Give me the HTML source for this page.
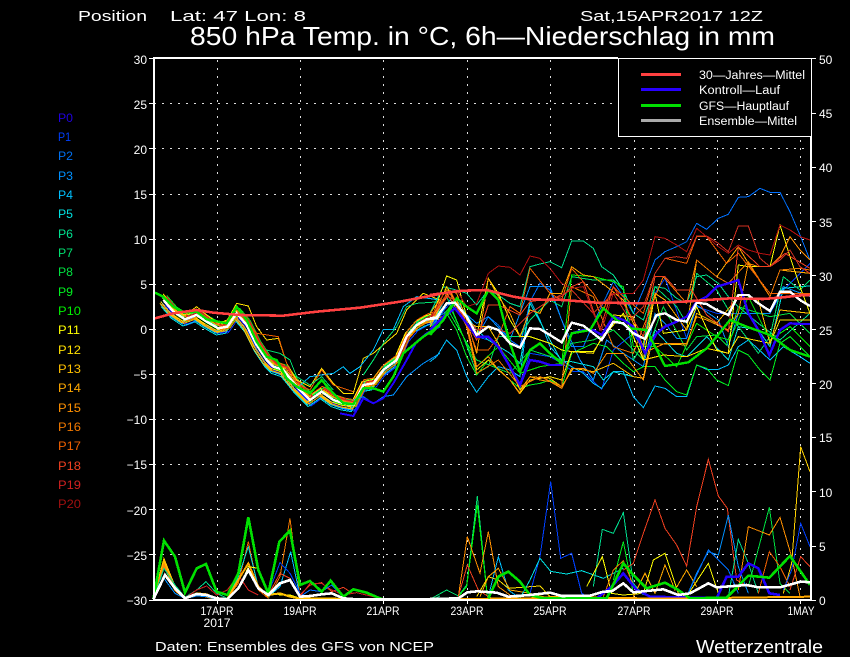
<!DOCTYPE html>
<html><head><meta charset="utf-8"><title>850 hPa Temp</title>
<style>
html,body{margin:0;padding:0;background:#000;width:850px;height:657px;overflow:hidden}
svg{display:block}
text{font-family:"Liberation Sans",sans-serif;fill:#fff}
polyline{fill:none;stroke-linejoin:miter;vector-effect:non-scaling-stroke;shape-rendering:crispEdges}
.g line{stroke:#ddd;stroke-width:1;stroke-dasharray:2 6;shape-rendering:crispEdges}
.t line{stroke:#fff;stroke-width:1;shape-rendering:crispEdges}
.l text{font-size:12px;text-anchor:end}
.r text{font-size:12px}
.x text{font-size:12px;text-anchor:middle}
.p text{font-size:12px}
.leg text{font-size:11.5px}
</style></head><body>
<svg width="850" height="657" viewBox="0 0 850 657" xmlns="http://www.w3.org/2000/svg">
<rect width="850" height="657" fill="#000"/>
<defs>
<polyline id="e" points="70,90 100,125 135,148 170,135 200,155 235,175 262,170 290,130 320,165 350,225 380,270 400,290 430,300 470,350 510,390 545,365 580,390 610,400 640,405 670,345 700,340 730,300 770,270 800,200 830,165 860,148 900,135"/>
</defs>
<g class="g">
<line x1="154" x2="811" y1="103.5" y2="103.5"/><line x1="154" x2="811" y1="148.5" y2="148.5"/><line x1="154" x2="811" y1="194.5" y2="194.5"/><line x1="154" x2="811" y1="239.5" y2="239.5"/><line x1="154" x2="811" y1="284.5" y2="284.5"/><line x1="154" x2="811" y1="329.5" y2="329.5"/><line x1="154" x2="811" y1="374.5" y2="374.5"/><line x1="154" x2="811" y1="419.5" y2="419.5"/><line x1="154" x2="811" y1="464.5" y2="464.5"/><line x1="154" x2="811" y1="509.5" y2="509.5"/><line x1="154" x2="811" y1="554.5" y2="554.5"/>
<line x1="217.5" x2="217.5" y1="60" y2="600"/><line x1="300.5" x2="300.5" y1="60" y2="600"/><line x1="383.5" x2="383.5" y1="60" y2="600"/><line x1="467.5" x2="467.5" y1="60" y2="600"/><line x1="550.5" x2="550.5" y1="60" y2="600"/><line x1="634.5" x2="634.5" y1="60" y2="600"/><line x1="717.5" x2="717.5" y1="60" y2="600"/><line x1="800.5" x2="800.5" y1="60" y2="600"/>
</g>

<!-- early temperature bundle -->
<g stroke-width="1" transform="translate(140,270) scale(.33333)">
<use href="#e" stroke="#2000ff" x="6" y="14"/><use href="#e" stroke="#0040ff" x="3" y="18"/><use href="#e" stroke="#0070ff" x="-4" y="12"/><use href="#e" stroke="#0090ff" x="-6" y="6"/><use href="#e" stroke="#00c0ff" x="-8" y="14"/><use href="#e" stroke="#00e0e0" x="-6" y="20"/><use href="#e" stroke="#00e090" x="-4" y="-8"/><use href="#e" stroke="#00e070" x="5" y="-12"/><use href="#e" stroke="#00e040" x="6" y="-4"/><use href="#e" stroke="#00f020" x="10" y="-14"/><use href="#e" stroke="#00f000" x="4" y="6"/><use href="#e" stroke="#ffff00" x="-4" y="-10"/><use href="#e" stroke="#ffe000" x="-8" y="5"/><use href="#e" stroke="#ffc000" x="-10" y="10"/><use href="#e" stroke="#ffa800" x="-3" y="12"/><use href="#e" stroke="#ff9000" x="5" y="-6"/><use href="#e" stroke="#f07800" x="8" y="4"/><use href="#e" stroke="#f06000" x="2" y="-16"/><use href="#e" stroke="#f04020" x="8" y="-8"/><use href="#e" stroke="#d02020" x="10" y="-10"/>
<polyline stroke="#ffe000" points="70,72 100,120 135,135 170,110 200,135 235,160 262,150 290,100 325,108 350,170 380,210 415,205 440,280 470,330 510,350 545,295 580,340 610,370 640,370 670,265 700,250 770,190 800,120 850,70 900,90"/>
<polyline stroke="#00c0ff" points="470,355 510,320 580,310 610,290 630,310 660,290 700,240 730,178 760,178 790,110 830,80 900,90"/>
<polyline stroke="#0090ff" points="640,390 670,380 700,400 730,380 760,375 800,320 850,280 900,250"/>
<polyline stroke="#2000ff" stroke-width="2" points="600,430 640,438 670,385 700,400 730,385 760,340 800,270 830,215 860,190 900,170"/>
<polyline stroke="#f06000" points="290,120 350,190 415,200 440,280 470,340 510,360 545,300 580,345 640,365"/>
<polyline stroke="#00e070" points="380,240 420,250 450,270 470,320 510,345 545,320 580,360" />
<polyline stroke="#00e070" points="670,315 700,270 730,220 770,170 800,110 830,100 900,95"/>
</g>

<!-- late temperature members -->
<g stroke-width="1" transform="translate(430,180) scale(.33333)">
<polyline stroke="#0040ff" points="0,440 60,370 140,470 175,480 205,500 270,610 300,520 360,530 395,550 430,575 460,575 515,628 550,510 610,460 640,510 675,340 705,295 770,475 800,380 860,400 925,400 1020,400 1060,330 1140,250"/>
<polyline stroke="#0070ff" points="0,430 40,400 80,370 110,410 140,470 175,410 205,435 240,480 270,500 300,365 330,310 360,330 395,420 425,500 460,500 490,430 550,305 580,350 610,400 640,330 675,240 705,215 740,200 770,185 800,130 830,148 865,115 895,103 925,52 955,50 990,25 1020,37 1050,37 1080,95 1110,165 1140,240"/>
<polyline stroke="#0090ff" points="0,450 60,360 140,430 175,410 240,480 300,320 360,320 395,420 450,540 490,600 530,480 580,520 640,560 675,400 705,430 740,475 770,475 800,375 865,420 895,500 925,400 1020,400 1060,320 1140,350"/>
<polyline stroke="#00c0ff" points="0,545 20,530 50,480 80,510 110,590 140,637 175,590 205,560 240,570 270,590 300,360 330,420 360,500 395,540 425,560 460,580 490,610 515,625 550,575 580,575 610,650 640,683 675,618 705,625 740,650 770,650 800,555 830,568 865,568 895,555 925,500 955,480 1020,540 1060,500 1110,530 1140,550"/>
<polyline stroke="#00e0e0" points="0,440 50,350 80,360 140,450 175,480 240,520 270,550 300,370 360,480 395,545 425,545 490,560 520,600 550,575 610,590 640,595 675,450 740,520 770,530 830,470 895,540 925,440 985,450 1020,500 1060,325 1110,320 1140,318"/>
<polyline stroke="#00e090" points="0,400 40,320 80,330 110,340 140,375 175,330 205,345 240,370 270,380 300,260 330,252 360,245 395,263 425,183 460,183 490,205 515,260 550,285 580,330 610,400 640,420 675,320 705,325 740,355 770,370 800,290 830,285 865,310 895,350 925,380 985,430 1050,480 1140,400"/>
<polyline stroke="#00e070" points="0,420 50,350 100,470 140,580 175,560 205,470 270,470 300,420 360,360 395,380 425,290 490,300 550,300 580,330 610,540 640,490 675,320 740,380 770,430 800,280 860,330 925,440 985,520 1020,470 1060,290 1110,330 1140,300"/>
<polyline stroke="#00e040" points="0,440 60,400 140,540 240,580 300,510 395,540 425,490 490,480 550,450 610,510 640,540 700,380 770,510 800,470 860,465 890,495 925,380 1020,410 1080,400 1140,460"/>
<polyline stroke="#00f020" points="0,450 50,400 80,450 110,530 140,585 175,540 205,570 240,600 270,625 300,615 330,610 360,600 395,620 425,520 490,490 530,500 580,550 610,575 640,560 675,560 705,600 740,635 770,645 800,555 830,565 860,600 895,617 925,510 955,525 990,570 1020,600 1050,490 1080,470 1110,500 1140,530"/>
<polyline stroke="#00f000" points="0,460 60,380 140,560 205,500 270,580 330,560 395,550 425,285 490,290 550,305 580,320 610,500 675,500 740,560 800,430 860,470 900,480 955,350 1020,480 1080,440 1140,500"/>
<polyline stroke="#ffff00" points="0,430 50,288 80,300 110,410 140,470 175,295 205,340 240,420 270,470 300,470 360,490 395,510 425,515 490,515 520,470 580,400 640,540 675,340 700,460 770,450 800,380 860,510 895,520 925,255 955,260 1020,260 1050,135 1080,230 1110,320 1140,400"/>
<polyline stroke="#ffe000" points="0,430 50,320 100,400 140,570 175,540 240,600 270,640 300,600 360,590 395,600 425,515 490,520 550,405 610,410 640,540 700,525 770,530 830,505 895,520 925,470 1020,490 1050,420 1140,420"/>
<polyline stroke="#ffc000" points="0,440 50,340 100,420 140,440 175,440 205,490 270,630 300,590 360,595 395,620 430,565 490,575 550,550 610,590 640,595 660,490 770,495 800,400 860,430 925,350 985,360 1020,490 1050,390 1140,400"/>
<polyline stroke="#ffa800" points="0,400 50,330 80,340 110,420 140,520 175,295 205,350 240,400 270,470 300,390 330,400 360,340 395,340 425,260 460,285 490,290 530,320 580,360 610,430 640,500 675,340 705,360 770,450 800,240 860,290 925,200 955,250 1020,350 1050,270 1140,280"/>
<polyline stroke="#ff9000" points="0,420 50,350 80,360 110,430 140,560 175,530 205,570 240,600 268,640 300,590 330,600 360,605 395,625 425,565 460,565 490,580 530,520 580,520 610,560 640,600 660,510 705,490 770,490 800,410 830,420 895,450 925,400 955,250 985,260 1020,260 1050,230 1080,170 1110,210 1140,240"/>
<polyline stroke="#f07800" points="0,410 60,340 110,440 140,580 205,540 270,620 330,590 395,620 425,320 490,350 550,500 610,520 640,440 700,290 770,370 800,240 860,290 895,310 955,245 1020,350 1050,270 1110,265 1140,270"/>
<polyline stroke="#f06000" points="0,410 60,330 110,430 140,510 175,510 205,470 240,380 270,400 300,265 360,340 395,360 425,265 490,340 520,390 550,320 580,350 640,400 675,280 705,235 770,250 800,170 830,170 890,250 925,220 1020,340 1140,340"/>
<polyline stroke="#f04020" points="0,420 60,340 140,480 175,375 205,375 270,405 300,365 395,350 425,320 460,305 510,450 550,320 610,420 640,470 675,290 705,290 740,330 785,330 830,405 895,455 925,200 990,260 1020,260 1065,220 1140,265"/>
<polyline stroke="#d03020" points="0,410 50,345 100,400 140,450 175,440 240,460 300,400 360,360 425,330 490,400 550,340 600,420 640,380 675,280 705,235 740,230 770,235 800,168 830,168 865,190 895,215 925,138 955,138 990,235 1020,260 1050,240 1080,210 1110,260 1140,280"/>
<polyline stroke="#b01010" points="0,420 40,340 80,330 110,380 140,370 175,280 205,258 240,262 270,285 300,228 330,235 360,265 395,310 425,325 460,320 490,400 515,450 550,340 580,340 610,340 640,300 675,170 705,175 740,195 770,215 800,145 830,170 865,200 895,220 925,195 955,210 990,220 1020,225 1050,135 1080,150 1110,170 1140,180"/>
</g>
<g stroke-width="2.4" transform="translate(430,180) scale(.33333)">
<polyline stroke="#2800ff" points="0,450 40,410 75,385 110,430 140,470 175,470 205,500 240,560 270,615 300,540 330,545 360,555 395,555 425,460 460,450 490,450 515,465 550,410 580,420 610,440 645,520 680,460 705,440 740,425 770,410 800,365 830,350 860,320 895,310 925,300 955,400 985,450 1018,525 1050,450 1080,430 1110,432 1140,432"/>
</g>
<g stroke-width="2.4" transform="translate(140,270) scale(.33333)">
<polyline stroke="#ffffff" points="70,90 100,125 135,148 170,135 200,155 235,175 262,170 290,130 320,165 350,225 380,270 400,290 430,300 470,350 510,390 545,365 580,390 610,400 640,405 670,345 700,340 730,300 770,270 800,200 830,165 860,148 890,145 900,130"/>
<polyline stroke="#00e000" points="45,68 70,80 100,110 130,128 170,125 200,148 235,155 260,160 290,110 320,150 350,215 380,260 410,270 440,325 470,350 510,370 545,330 580,370 610,400 640,403 670,355 700,355 730,365 760,320 790,250 820,225 850,200 880,180 900,165"/>
<polyline stroke="#ff4040" stroke-width="2.6" points="45,145 100,130 170,120 220,128 300,135 430,137 530,125 660,113 780,95 900,72"/>
</g>
<g stroke-width="2.4" transform="translate(430,180) scale(.33333)">
<polyline stroke="#00e000" points="0,465 40,420 80,355 110,380 140,400 175,330 205,360 240,490 270,575 300,510 330,490 360,520 395,550 425,460 480,450 520,385 560,420 600,445 650,450 670,490 705,558 740,553 775,547 830,505 860,470 900,420 950,440 1020,465 1080,510 1140,530"/>
<polyline stroke="#ffffff" points="0,415 20,412 50,370 75,368 110,410 140,465 175,440 205,450 240,490 270,503 300,445 330,447 360,465 395,487 425,428 460,437 490,460 515,480 550,425 580,430 610,460 645,477 680,405 705,400 740,420 770,425 800,368 830,372 860,390 895,405 925,345 955,345 985,370 1020,393 1050,335 1080,335 1110,360 1140,378"/>
<polyline stroke="#ff4040" stroke-width="2.6" points="0,345 50,338 100,332 170,330 250,350 300,358 400,360 500,368 640,370 760,365 830,360 900,355 1000,357 1060,352 1100,347 1140,345"/>
</g>

<!-- early precipitation -->
<g stroke-width="1" transform="translate(140,500) scale(.33333)">
<polyline stroke="#ffc000" stroke-width="2" points="40,298 72,180 105,262 135,295 170,280 200,283 230,296"/>
<polyline stroke="#ff9000" stroke-width="2" points="40,298 72,195 105,270 135,296 170,282 200,290 230,298"/>
<polyline stroke="#00e090" points="40,298 72,205 105,255 135,292 170,270 198,245 230,280 262,295"/>
<polyline stroke="#0090ff" points="40,298 72,235 105,280 135,296 170,288 200,290 230,298"/>
<polyline stroke="#d02020" points="135,295 170,270 200,258 230,285 262,270 295,225 325,270 355,285"/>
<polyline stroke="#f06000" points="262,295 295,250 325,125 355,270 385,295"/>
<polyline stroke="#00e0e0" points="262,295 295,230 325,140 355,260 385,290"/>
<polyline stroke="#ffa800" stroke-width="2" points="262,296 295,240 325,190 355,260 385,290"/>
<polyline stroke="#ffff00" points="295,270 325,200 355,205 385,275 420,285 450,285 480,295"/>
<polyline stroke="#f07800" points="385,295 420,230 450,55 480,290"/>
<polyline stroke="#00c0ff" points="385,290 420,260 452,155 480,290"/>
<polyline stroke="#0040ff" points="385,280 420,188 450,220 480,280"/>
<polyline stroke="#f04020" points="385,285 420,220 450,235 480,285 510,255 545,248 575,275 610,262 640,282"/>
<polyline stroke="#d02020" points="480,290 510,250 545,250 575,270 610,285 650,278 720,295"/>
<polyline stroke="#0070ff" points="480,290 510,270 545,275 575,255 610,292"/>
<polyline stroke="#ffc000" stroke-width="2" points="385,285 420,280 450,290 480,296 575,295 610,298"/>
<polyline stroke="#00e000" stroke-width="2.6" points="40,298 72,122 105,170 135,278 170,205 198,192 230,275 262,285 295,220 325,52 355,210 385,280 418,125 450,92 480,255 510,243 545,275 572,242 610,290 640,268 680,278 720,295 730,298"/>
<polyline stroke="#ffffff" stroke-width="2.6" points="40,298 75,225 105,265 135,295 170,282 200,285 230,295 262,298 295,265 325,210 355,265 385,285 420,250 450,240 480,290 510,288 545,283 575,280 610,295 650,298 900,298"/>
<polyline stroke="#00e090" points="880,298 900,288"/>
</g>

<!-- late precipitation -->
<g stroke-width="1" transform="translate(430,430) scale(.33333)">
<polyline stroke="#00e070" points="0,508 50,480 85,498 110,465 142,198 172,500 200,508"/>
<polyline stroke="#00f000" points="85,500 110,470 142,225 172,500"/>
<polyline stroke="#ff9000" points="85,500 112,320 150,430 175,305 205,470 240,495"/>
<polyline stroke="#f04020" points="85,500 112,405 145,480 175,500"/>
<polyline stroke="#00c0ff" points="175,500 205,380 235,480 270,505"/>
<polyline stroke="#ffe000" points="140,500 175,440 205,450 235,475 300,470 330,468 360,500"/>
<polyline stroke="#ffa800" points="150,500 175,440 205,415 240,480 300,490 360,505"/>
<polyline stroke="#0040ff" points="300,490 330,380 362,155 392,385 425,370 455,490 480,505"/>
<polyline stroke="#00e0e0" points="270,505 300,450 330,385 362,424 410,432 455,422 520,445 580,415"/>
<polyline stroke="#00e090" points="490,470 517,298 550,310 580,248 610,460 640,495"/>
<polyline stroke="#00f020" points="550,450 580,335 610,490"/>
<polyline stroke="#ffff00" points="470,470 517,380 545,490 580,495 640,490 670,390 705,370 745,490 770,500 835,400 865,490"/>
<polyline stroke="#f04020" points="580,420 610,400 640,310 675,210 705,295 740,345 770,408 800,230 835,88 865,198 892,235 920,450 955,470"/>
<polyline stroke="#ffa800" points="610,500 645,430 675,490 705,405 735,480 770,420 800,470"/>
<polyline stroke="#f07800" points="520,500 550,420 580,392 620,490"/>
<polyline stroke="#0090ff" points="770,500 800,430 835,365 865,375 895,255 925,410 955,490"/>
<polyline stroke="#0070ff" points="770,500 835,360 895,420 925,490"/>
<polyline stroke="#00e090" points="895,500 925,328 955,400 985,490"/>
<polyline stroke="#00e040" points="955,470 1018,232 1050,460 1080,490"/>
<polyline stroke="#ff9000" points="925,480 955,290 1018,315 1050,262 1085,380 1110,500"/>
<polyline stroke="#f06000" points="985,490 1018,365 1050,410 1080,470"/>
<polyline stroke="#ffd000" points="1060,490 1085,400 1112,50 1140,125"/>
<polyline stroke="#0040ff" points="1060,480 1085,420 1112,280 1140,350"/>
<polyline stroke="#f04020" points="1080,480 1112,380 1140,410"/>
<polyline stroke="#2000ff" stroke-width="2.6" points="500,505 545,470 580,430 620,480 660,500 860,505 890,440 925,440 955,400 985,415 1018,490 1050,495"/>
<polyline stroke="#ffa800" stroke-width="2" points="0,508 300,505 420,498 480,503 640,505 780,505 1140,500"/>
<polyline stroke="#00e000" stroke-width="2.6" points="175,505 205,440 235,425 270,455 300,495 340,505 530,505 580,400 610,435 650,475 705,458 745,480 780,505 890,503 955,437 1018,443 1080,378 1140,465"/>
<polyline stroke="#ffffff" stroke-width="2.6" points="0,507 85,505 112,487 142,484 200,488 235,500 300,495 360,488 395,498 480,497 520,485 545,484 580,460 610,487 700,478 745,495 780,490 835,460 860,472 950,465 985,472 1050,472 1112,455 1145,457"/>
</g>

<!-- frame -->
<g fill="#fff" shape-rendering="crispEdges">
<rect x="153" y="57" width="2" height="544"/>
<rect x="153" y="57" width="465" height="2"/>
<rect x="153" y="599" width="659" height="2"/>
<rect x="810" y="136" width="2" height="465"/>
</g>
<rect x="618.5" y="58.5" width="193" height="78" fill="#000" stroke="#fff" stroke-width="1" shape-rendering="crispEdges"/>
<g class="t">
<line x1="149" x2="154" y1="58.5" y2="58.5"/><line x1="149" x2="154" y1="103.5" y2="103.5"/><line x1="149" x2="154" y1="148.5" y2="148.5"/><line x1="149" x2="154" y1="194.5" y2="194.5"/><line x1="149" x2="154" y1="239.5" y2="239.5"/><line x1="149" x2="154" y1="284.5" y2="284.5"/><line x1="149" x2="154" y1="329.5" y2="329.5"/><line x1="149" x2="154" y1="374.5" y2="374.5"/><line x1="149" x2="154" y1="419.5" y2="419.5"/><line x1="149" x2="154" y1="464.5" y2="464.5"/><line x1="149" x2="154" y1="509.5" y2="509.5"/><line x1="149" x2="154" y1="554.5" y2="554.5"/><line x1="149" x2="154" y1="600.5" y2="600.5"/>
<line x1="811" x2="816" y1="58.5" y2="58.5"/><line x1="811" x2="816" y1="113.5" y2="113.5"/><line x1="811" x2="816" y1="167.5" y2="167.5"/><line x1="811" x2="816" y1="221.5" y2="221.5"/><line x1="811" x2="816" y1="275.5" y2="275.5"/><line x1="811" x2="816" y1="329.5" y2="329.5"/><line x1="811" x2="816" y1="383.5" y2="383.5"/><line x1="811" x2="816" y1="437.5" y2="437.5"/><line x1="811" x2="816" y1="491.5" y2="491.5"/><line x1="811" x2="816" y1="546.5" y2="546.5"/><line x1="811" x2="816" y1="600.5" y2="600.5"/>
<line x1="217.5" x2="217.5" y1="601" y2="604"/><line x1="300.5" x2="300.5" y1="601" y2="604"/><line x1="383.5" x2="383.5" y1="601" y2="604"/><line x1="467.5" x2="467.5" y1="601" y2="604"/><line x1="550.5" x2="550.5" y1="601" y2="604"/><line x1="634.5" x2="634.5" y1="601" y2="604"/><line x1="717.5" x2="717.5" y1="601" y2="604"/><line x1="800.5" x2="800.5" y1="601" y2="604"/>
</g>

<!-- legend -->
<g shape-rendering="crispEdges">
<rect x="641" y="73" width="40" height="3" fill="#ff4040"/>
<rect x="641" y="88" width="40" height="3" fill="#2800ff"/>
<rect x="641" y="104" width="40" height="3" fill="#00e000"/>
<rect x="641" y="119" width="40" height="3" fill="#aaaaaa"/>
</g>
<g class="leg">
<text x="699" y="79" textLength="106" lengthAdjust="spacingAndGlyphs">30—Jahres—Mittel</text>
<text x="699" y="94" textLength="81" lengthAdjust="spacingAndGlyphs">Kontroll—Lauf</text>
<text x="699" y="110" textLength="90" lengthAdjust="spacingAndGlyphs">GFS—Hauptlauf</text>
<text x="699" y="125" textLength="98" lengthAdjust="spacingAndGlyphs">Ensemble—Mittel</text>
</g>

<!-- axis labels -->
<g class="l">
<text x="147" y="64">30</text><text x="147" y="109">25</text><text x="147" y="154">20</text><text x="147" y="199">15</text><text x="147" y="244">10</text><text x="147" y="289">5</text><text x="147" y="334">0</text><text x="147" y="379">−5</text><text x="147" y="424">−10</text><text x="147" y="469">−15</text><text x="147" y="515">−20</text><text x="147" y="560">−25</text><text x="147" y="605">−30</text>
</g>
<g class="r">
<text x="819" y="64">50</text><text x="819" y="118">45</text><text x="819" y="172">40</text><text x="819" y="227">35</text><text x="819" y="281">30</text><text x="819" y="335">25</text><text x="819" y="389">20</text><text x="819" y="442">15</text><text x="819" y="497">10</text><text x="819" y="551">5</text><text x="819" y="605">0</text>
</g>
<g class="x">
<text x="217" y="615" textLength="33" lengthAdjust="spacingAndGlyphs">17APR</text><text x="217" y="627" textLength="27" lengthAdjust="spacingAndGlyphs">2017</text><text x="300" y="615" textLength="33" lengthAdjust="spacingAndGlyphs">19APR</text><text x="383" y="615" textLength="33" lengthAdjust="spacingAndGlyphs">21APR</text><text x="467" y="615" textLength="33" lengthAdjust="spacingAndGlyphs">23APR</text><text x="550" y="615" textLength="33" lengthAdjust="spacingAndGlyphs">25APR</text><text x="634" y="615" textLength="33" lengthAdjust="spacingAndGlyphs">27APR</text><text x="717" y="615" textLength="33" lengthAdjust="spacingAndGlyphs">29APR</text><text x="801" y="615" textLength="27" lengthAdjust="spacingAndGlyphs">1MAY</text>
</g>

<!-- member labels -->
<g class="p">
<text x="58" y="122" style="fill:#2000e0" textLength="15" lengthAdjust="spacingAndGlyphs">P0</text>
<text x="58" y="141" style="fill:#0040ff" textLength="13" lengthAdjust="spacingAndGlyphs">P1</text>
<text x="58" y="160" style="fill:#0070f0" textLength="15" lengthAdjust="spacingAndGlyphs">P2</text>
<text x="58" y="180" style="fill:#0090ff" textLength="15" lengthAdjust="spacingAndGlyphs">P3</text>
<text x="58" y="199" style="fill:#00c0ff" textLength="15" lengthAdjust="spacingAndGlyphs">P4</text>
<text x="58" y="218" style="fill:#00e0e0" textLength="15" lengthAdjust="spacingAndGlyphs">P5</text>
<text x="58" y="238" style="fill:#00e090" textLength="15" lengthAdjust="spacingAndGlyphs">P6</text>
<text x="58" y="257" style="fill:#00e070" textLength="15" lengthAdjust="spacingAndGlyphs">P7</text>
<text x="58" y="276" style="fill:#00e040" textLength="15" lengthAdjust="spacingAndGlyphs">P8</text>
<text x="58" y="296" style="fill:#00f020" textLength="15" lengthAdjust="spacingAndGlyphs">P9</text>
<text x="58" y="315" style="fill:#00f000" textLength="23" lengthAdjust="spacingAndGlyphs">P10</text>
<text x="58" y="334" style="fill:#ffff00" textLength="22" lengthAdjust="spacingAndGlyphs">P11</text>
<text x="58" y="354" style="fill:#ffe000" textLength="23" lengthAdjust="spacingAndGlyphs">P12</text>
<text x="58" y="373" style="fill:#ffc000" textLength="23" lengthAdjust="spacingAndGlyphs">P13</text>
<text x="58" y="392" style="fill:#ffa800" textLength="23" lengthAdjust="spacingAndGlyphs">P14</text>
<text x="58" y="412" style="fill:#ff9000" textLength="23" lengthAdjust="spacingAndGlyphs">P15</text>
<text x="58" y="431" style="fill:#f07800" textLength="23" lengthAdjust="spacingAndGlyphs">P16</text>
<text x="58" y="450" style="fill:#f06000" textLength="23" lengthAdjust="spacingAndGlyphs">P17</text>
<text x="58" y="470" style="fill:#f04020" textLength="23" lengthAdjust="spacingAndGlyphs">P18</text>
<text x="58" y="489" style="fill:#d02020" textLength="23" lengthAdjust="spacingAndGlyphs">P19</text>
<text x="58" y="508" style="fill:#a01010" textLength="23" lengthAdjust="spacingAndGlyphs">P20</text>
</g>

<!-- titles -->
<text x="78" y="21" font-size="15" textLength="69" lengthAdjust="spacingAndGlyphs">Position</text>
<text x="170" y="21" font-size="15" textLength="136" lengthAdjust="spacingAndGlyphs">Lat: 47  Lon: 8</text>
<text x="580" y="21" font-size="15" textLength="183" lengthAdjust="spacingAndGlyphs">Sat,15APR2017 12Z</text>
<text x="190" y="45" font-size="26" textLength="585" lengthAdjust="spacingAndGlyphs">850 hPa Temp. in °C, 6h—Niederschlag in mm</text>
<text x="155" y="651" font-size="12.5" textLength="279" lengthAdjust="spacingAndGlyphs">Daten: Ensembles des GFS von NCEP</text>
<text x="696" y="653" font-size="18" textLength="127" lengthAdjust="spacingAndGlyphs">Wetterzentrale</text>
</svg>
</body></html>
